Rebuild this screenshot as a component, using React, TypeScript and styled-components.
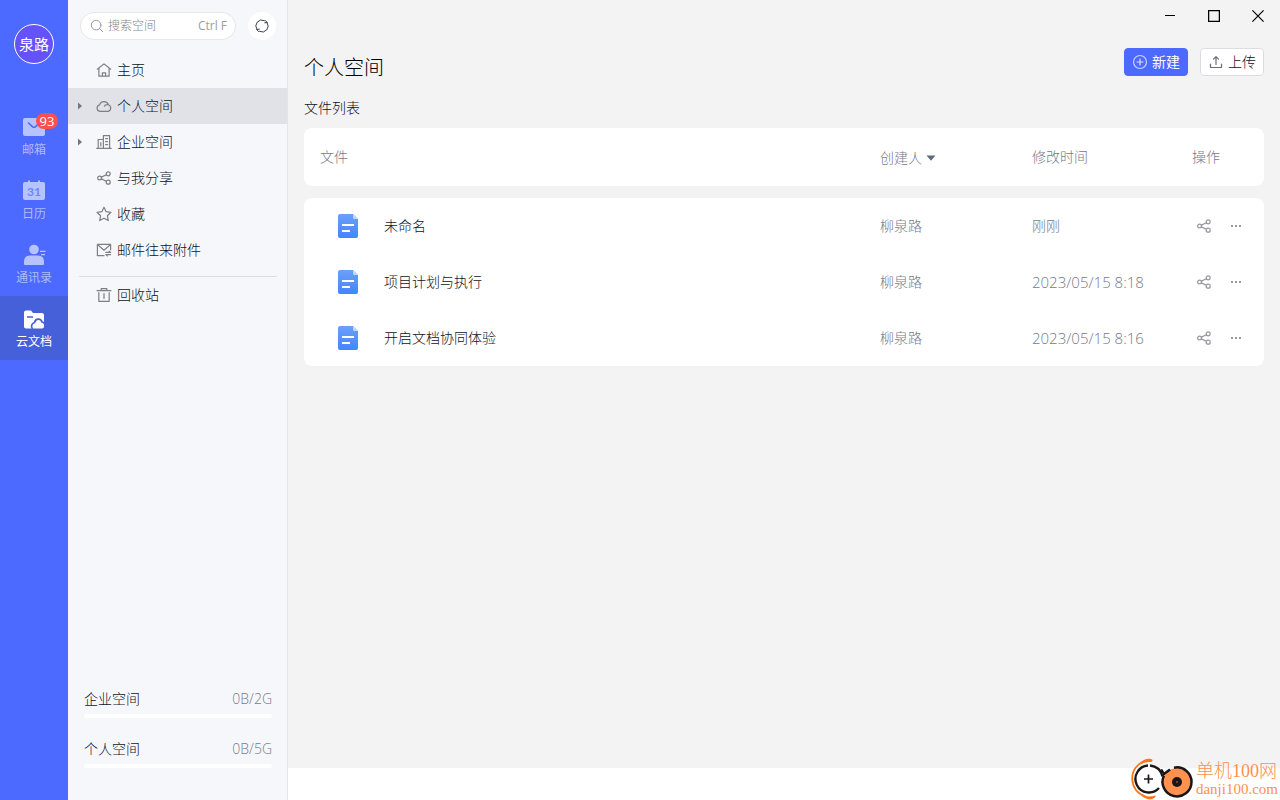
import React from 'react';
import styled, { createGlobalStyle, css } from 'styled-components';

const GlobalStyle = createGlobalStyle`
  *, *::before, *::after { box-sizing: border-box; }
  body {
    margin: 0;
    background: #ffffff;
    color: #0d1226;
    font-family: "Open Sans", "Noto Sans CJK SC", sans-serif;
    font-size: 14px;
    font-weight: 300;
    line-height: 20px;
  }
  button, input { font: inherit; color: inherit; }
  svg { display: block; flex: none; }
`;

const Shell = styled.div`
  display: grid;
  grid-template-columns: 68px 220px minmax(0, 1fr);
  min-height: 100vh;
`;

/* ---------- application rail ---------- */

const Rail = styled.nav`
  display: flex;
  flex-direction: column;
  align-items: center;
  padding-top: 24px;
  background: #4c6aff;
`;

const Avatar = styled.button`
  width: 40px;
  height: 40px;
  margin-bottom: 40px;
  padding: 0;
  border: 1px solid #ffffff;
  border-radius: 50%;
  background: #6552fb;
  color: #ffffff;
  font-size: 15px;
  font-weight: 400;
  white-space: nowrap;
`;

const RailLink = styled.a<{ $active?: boolean }>`
  display: flex;
  flex-direction: column;
  align-items: center;
  gap: 2px;
  width: 100%;
  height: 64px;
  padding-top: 11px;
  font-size: 12px;
  line-height: 18px;
  font-weight: 400;
  text-decoration: none;
  color: ${(p) => (p.$active ? '#ffffff' : '#aebbff')};
  background: ${(p) => (p.$active ? '#4560d9' : 'transparent')};
`;

const RailIcon = styled.span`
  position: relative;
  color: #b7c3ff;
  ${RailLink}[aria-current] & { color: #ffffff; }
`;

const Badge = styled.span`
  position: absolute;
  top: -2px;
  left: 14px;
  min-width: 22px;
  height: 16px;
  border-radius: 8px;
  background: #fa5050;
  color: #ffffff;
  text-align: center;
  font-size: 13px;
  line-height: 16px;
`;

/* ---------- side panel ---------- */

const Side = styled.aside`
  display: flex;
  flex-direction: column;
  border-right: 1px solid #e4e5ec;
  background: #f6f7fb;
`;

const SearchRow = styled.div`
  display: flex;
  align-items: center;
  gap: 12px;
  padding: 12px 11px 12px 12px;
`;

const SearchBox = styled.label`
  display: flex;
  flex: 1;
  align-items: center;
  min-width: 0;
  height: 28px;
  padding: 0 8px 0 9px;
  border: 1px solid #e6e7ea;
  border-radius: 14px;
  background: #ffffff;
  color: #8a8d94;
  font-size: 12px;
`;

const SearchInput = styled.input`
  flex: 1;
  min-width: 0;
  padding: 0 0 0 4px;
  border: 0;
  outline: 0;
  background: none;
  &::placeholder { color: #7f8289; opacity: 1; }
`;

const Shortcut = styled.kbd`
  font-family: inherit;
  font-size: 12px;
  font-weight: 400;
  color: #9b9da3;
`;

const RoundButton = styled.button`
  display: grid;
  place-items: center;
  width: 28px;
  height: 28px;
  padding: 0;
  border: 0;
  border-radius: 50%;
  background: #ffffff;
  color: #3b3f4c;
`;

const SpaceLink = styled.a<{ $active?: boolean }>`
  display: grid;
  grid-template-columns: 8px 16px 1fr;
  align-items: center;
  height: 36px;
  padding-left: 8px;
  column-gap: 12px;
  color: inherit;
  text-decoration: none;
  background: ${(p) => (p.$active ? '#e1e2e8' : 'transparent')};
`;

const Caret = styled.span`
  color: #75777e;
`;

const SpaceIcon = styled.span`
  color: #7d7f86;
`;

const SpaceName = styled.span`
  margin-left: -7px;
`;

const Divider = styled.hr`
  margin: 8px 10px 0 11px;
  border: 0;
  border-top: 1px solid #dcdde2;
`;

const UsageList = styled.div`
  display: flex;
  flex-direction: column;
  gap: 21px;
  margin-top: auto;
  padding: 0 15px 32px 16px;
`;

const UsageLabel = styled.div`
  display: flex;
  justify-content: space-between;
  margin-bottom: 5px;
`;

const UsageAmount = styled.span`
  color: #767a89;
`;

const UsageTrack = styled.div`
  height: 4px;
  border-radius: 2px;
  background: #ffffff;
`;

/* ---------- main area ---------- */

const Main = styled.main`
  display: flex;
  flex-direction: column;
  min-width: 0;
  background: #f3f3f3;
`;

const TitleBar = styled.div`
  display: flex;
  justify-content: flex-end;
`;

const WindowButton = styled.button`
  display: grid;
  place-items: center;
  width: 44px;
  height: 32px;
  padding: 0;
  border: 0;
  background: none;
  color: #000000;
`;

const Content = styled.section`
  flex: 1;
  padding: 16px;
`;

const Heading = styled.header`
  display: flex;
  align-items: flex-start;
  justify-content: space-between;
`;

const Title = styled.h1`
  margin: 0;
  font-size: 20px;
  line-height: 40px;
  font-weight: 300;
  color: #000000;
`;

const Actions = styled.div`
  display: flex;
  gap: 12px;
`;

const ActionButton = styled.button<{ $primary?: boolean }>`
  display: flex;
  align-items: center;
  justify-content: center;
  gap: 4px;
  width: 64px;
  height: 28px;
  padding: 0;
  border: 1px solid #dcdde2;
  border-radius: 4px;
  background: #ffffff;
  color: #0d1226;
  white-space: nowrap;
  ${(p) =>
    p.$primary &&
    css`
      border-color: #4c6aff;
      background: #4c6aff;
      color: #ffffff;
      font-weight: 400;
    `}
`;

const ListTitle = styled.h2`
  margin: 10px 0;
  font-size: 14px;
  line-height: 20px;
  font-weight: 300;
`;

const FileTable = styled.table`
  width: 100%;
  table-layout: fixed;
  border-spacing: 0;
  color: #767a89;
  text-align: left;
`;

const HeadCell = styled.th<{ $width?: number }>`
  width: ${(p) => (p.$width ? `${p.$width}px` : 'auto')};
  height: 58px;
  padding: 0 0 0 16px;
  font-weight: 300;
  background: #ffffff;
  &:first-child { border-radius: 8px 0 0 8px; }
  &:last-child { border-radius: 0 8px 8px 0; }
`;

const SortButton = styled.button`
  display: flex;
  align-items: center;
  gap: 4px;
  padding: 2px 0 0;
  border: 0;
  background: none;
`;

const FileBody = styled.tbody`
  &::before {
    content: "";
    display: block;
    height: 12px;
  }
  tr:first-child td:first-child { border-top-left-radius: 8px; }
  tr:first-child td:last-child { border-top-right-radius: 8px; }
  tr:last-child td:first-child { border-bottom-left-radius: 8px; }
  tr:last-child td:last-child { border-bottom-right-radius: 8px; }
`;

const Cell = styled.td`
  height: 56px;
  padding: 0 0 0 16px;
  background: #ffffff;
`;

const DateTime = styled.time`
  font-size: 15px;
`;

const FileLink = styled.a`
  display: flex;
  align-items: center;
  gap: 24px;
  padding-left: 16px;
  color: #0d1226;
  text-decoration: none;
`;

const RowActions = styled.div`
  display: flex;
  gap: 8px;
`;

const IconButton = styled.button`
  display: grid;
  place-items: center;
  width: 24px;
  height: 24px;
  padding: 0;
  border: 0;
  background: none;
  color: #96989e;
`;

const Footer = styled.footer`
  position: relative;
  height: 32px;
  background: #ffffff;
`;

const SiteMark = styled.a`
  position: absolute;
  right: 2px;
  bottom: 0;
  display: flex;
  align-items: center;
  gap: 2px;
  color: #ff8f4f;
  text-decoration: none;
`;

const SiteText = styled.span`
  display: flex;
  flex-direction: column;
  padding-top: 2px;
  font-family: "Liberation Serif", "Noto Sans CJK SC", serif;
  font-size: 18px;
  line-height: 18px;
  white-space: nowrap;
`;

const SiteDomain = styled.span`
  font-size: 15px;
`;

/* ---------- drawings ---------- */

const Line = ({ size = 16, children }: { size?: number; children: React.ReactNode }) => (
  <svg width={size} height={size} viewBox="0 0 16 16" fill="none" stroke="currentColor"
    strokeWidth="1.2" strokeLinejoin="round" strokeLinecap="round" aria-hidden="true">
    {children}
  </svg>
);

const HomeIcon = () => (
  <Line>
    <path d="M1.3 7.2 8 1.9l6.700 5.300M2.900 6.200v8h10.200v-8M6.400 14.100v-3.300h3.200v3.300" />
  </Line>
);
const CloudIcon = () => (
  <Line>
    <path d="M4.200 13.400a3.300 3.300 0 0 1-.6-6.500 4.600 4.600 0 0 1 8.800-.2 3.500 3.500 0 0 1-.4 6.700zM8.400 8.200c.4-1.200 1.600-1.800 4-1.500" />
  </Line>
);
const OfficeIcon = () => (
  <Line>
    <path d="M.8 14.400h14.400M7.400 14.200V1.600h6.200v12.600M7.400 5.500H2.200v8.700M9.600 4.600h2M9.600 7.600h2M9.600 10.600h2M4.800 8.500v3.500" />
  </Line>
);
const ShareIcon = () => (
  <Line>
    <circle cx="3.600" cy="8" r="1.900" />
    <circle cx="12.200" cy="3.800" r="2" />
    <circle cx="12.200" cy="12.200" r="2" />
    <path d="m5.400 7.100 4.900-2.400M5.400 8.900l4.900 2.400" />
  </Line>
);
const StarIcon = () => (
  <Line>
    <path d="m8 1.200 2.100 4.500 4.900.6-3.600 3.400.9 4.900L8 12.200l-4.300 2.400.9-4.900L1 6.300l4.900-.6z" />
  </Line>
);
const MailIcon = () => (
  <Line>
    <path d="M8 13.700H1.400V2.300h13.200v5.400M1.600 2.600 8 8.200l6.400-5.600M9.800 10.400h4.800l-1.500-1.300M14.600 12.600H9.800l1.500 1.300" />
  </Line>
);
const TrashIcon = () => (
  <Line>
    <path d="M1 3.700h14M5.200 3.500V1.600h5.600v1.900M2.800 5.500v8.800h10.400V5.500" />
    <path d="M8 7v4.200" strokeWidth="1.800" opacity=".7" />
  </Line>
);
const CaretIcon = () => (
  <svg width="8" height="8" viewBox="0 0 8 8" aria-hidden="true">
    <path d="M2 .5 6 4 2 7.500z" fill="currentColor" />
  </svg>
);

const RailMail = () => (
  <svg width="24" height="24" viewBox="0 0 24 24" aria-hidden="true">
    <rect x="1" y="3" width="22" height="18" rx="2" fill="currentColor" />
    <path d="m6 7.500 4.700 4.300q1.300 1 2.600 0L18 7.500" fill="none" stroke="#4c6aff" strokeWidth="1.600" />
  </svg>
);
const RailCalendar = () => (
  <svg width="24" height="24" viewBox="0 0 24 24" aria-hidden="true">
    <path d="M3 3h3V1.500h2V3h8V1.500h2V3h3a2 2 0 0 1 2 2v14a2 2 0 0 1-2 2H3a2 2 0 0 1-2-2V5a2 2 0 0 1 2-2z" fill="currentColor" />
    <text x="12" y="17" textAnchor="middle" fontSize="12" fontWeight="700" fill="#6a8af6" fontFamily="Lato, sans-serif">31</text>
  </svg>
);
const RailContacts = () => (
  <svg width="24" height="24" viewBox="0 0 24 24" fill="currentColor" aria-hidden="true">
    <circle cx="12" cy="6.500" r="4.800" />
    <path d="M2 21v-2.500q0-6 6-6h8q6 0 6 6V21q0 1-1 1H3q-1 0-1-1z" />
    <path d="M18 7.800h5.500v1.200H18zM19 11h4v1.200h-4z" />
  </svg>
);
const RailDocs = () => (
  <svg width="24" height="24" viewBox="0 0 24 24" aria-hidden="true">
    <path d="M2 5.500Q2 3.500 4 3.500h5l2 2.500h9q2 0 2 2v11.500q0 2-2 2H4q-2 0-2-2z" fill="currentColor" />
    <path d="M5 10h6" stroke="#4560d9" strokeWidth="1.500" />
    <path d="M10.500 22a4 4 0 0 1 2-6.500c1-4.500 6.500-4.500 7.500-.5q2 .2 2.500 2" fill="none" stroke="#4560d9" strokeWidth="1.700" />
  </svg>
);

const DocIcon = () => (
  <svg width="24" height="24" viewBox="0 0 24 24" aria-hidden="true">
    <defs>
      <linearGradient id="docFill" x1="0" y1="0" x2="0" y2="1">
        <stop offset="0" stopColor="#6d9ff8" />
        <stop offset="1" stopColor="#4285ff" />
      </linearGradient>
    </defs>
    <path d="M4 0h13l5 5v17q0 2-2 2H4q-2 0-2-2V2q0-2 2-2z" fill="url(#docFill)" />
    <path d="M17 0v3.500Q17 5 18.500 5H22z" fill="#c3d7fd" />
    <path d="M6 11h12M6 17h8" stroke="#ffffff" strokeWidth="2" />
  </svg>
);

const SiteLogo = () => (
  <svg width="64" height="42" viewBox="0 0 64 42" fill="none" aria-hidden="true">
    <path d="M17 2.500C7 5 1.500 13 2.300 22c.7 8 6 14 13.200 16.500" stroke="#ff7416" strokeWidth="1.800" />
    <path d="M8 7c4-5 9-7 13-6 2 .5 2 2.500 0 3-5 0-9 1-13 3zM11 37c5 2 10 1.500 15 .5-1 4-9 6-15-.5z" fill="#ff7416" />
    <circle cx="19" cy="21" r="14" fill="#ffffff" />
    <path d="M18 7.500a13.500 13.500 0 1 0 11 22.500M20 7.500q10 1 12.500 11" stroke="#1b1719" strokeWidth="2.300" />
    <path d="M14 21h9M18.500 16.500v9" stroke="#1b1719" strokeWidth="1.700" />
    <circle cx="47" cy="24" r="14" fill="#ff924f" />
    <path d="M44 9.700A14.500 14.500 0 1 1 34 17.500M31 11.500l3 4.500 6-4.500" stroke="#1b1719" strokeWidth="2.500" />
    <circle cx="47" cy="24" r="5" fill="#1b1719" />
    <circle cx="47" cy="24" r=".7" fill="#ff924f" />
  </svg>
);

/* ---------- data ---------- */

const apps = [
  { name: '邮箱', icon: <RailMail />, badge: 93 },
  { name: '日历', icon: <RailCalendar /> },
  { name: '通讯录', icon: <RailContacts /> },
  { name: '云文档', icon: <RailDocs />, active: true },
];

const spaces = [
  { name: '主页', icon: <HomeIcon /> },
  { name: '个人空间', icon: <CloudIcon />, nested: true, active: true },
  { name: '企业空间', icon: <OfficeIcon />, nested: true },
  { name: '与我分享', icon: <ShareIcon /> },
  { name: '收藏', icon: <StarIcon /> },
  { name: '邮件往来附件', icon: <MailIcon /> },
];

const usage = [
  { name: '企业空间', amount: '0B/2G' },
  { name: '个人空间', amount: '0B/5G' },
];

const files = [
  { name: '未命名', owner: '柳泉路', time: '刚刚' },
  { name: '项目计划与执行', owner: '柳泉路', time: '2023/05/15 8:18', dated: true },
  { name: '开启文档协同体验', owner: '柳泉路', time: '2023/05/15 8:16', dated: true },
];

type Space = { name: string; icon: React.ReactNode; nested?: boolean; active?: boolean };

const SpaceItem = ({ name, icon, nested, active }: Space) => (
  <SpaceLink href="#" $active={active} aria-current={active ? 'page' : undefined}>
    <Caret>{nested && <CaretIcon />}</Caret>
    <SpaceIcon>{icon}</SpaceIcon>
    <SpaceName>{name}</SpaceName>
  </SpaceLink>
);

export default function App() {
  return (
    <>
      <GlobalStyle />
      <Shell>
        <Rail aria-label="应用">
          <Avatar type="button">泉路</Avatar>
          {apps.map((app) => (
            <RailLink key={app.name} href="#" $active={app.active} aria-current={app.active ? 'page' : undefined}>
              <RailIcon>
                {app.icon}
                {app.badge && <Badge>{app.badge}</Badge>}
              </RailIcon>
              {app.name}
            </RailLink>
          ))}
        </Rail>

        <Side>
          <SearchRow>
            <SearchBox>
              <Line size={14}>
                <circle cx="7" cy="7" r="5.500" strokeWidth="1" />
                <path d="m11 11 3.500 3.500" strokeWidth="1" />
              </Line>
              <SearchInput type="text" placeholder="搜索空间" aria-label="搜索空间" />
              <Shortcut>Ctrl F</Shortcut>
            </SearchBox>
            <RoundButton type="button" aria-label="刷新">
              <Line>
                <path d="M3 11.500A6 6 0 0 1 10.500 2.600M13 4.500A6 6 0 0 1 5.500 13.400M11.600 2.600l1.400 1.900M13 4.500l-2.200.3M4.400 13.400 3 11.500M3 11.500l2.200-.3" strokeWidth="1" />
              </Line>
            </RoundButton>
          </SearchRow>
          <nav aria-label="空间">
            {spaces.map((space) => (
              <SpaceItem key={space.name} {...space} />
            ))}
            <Divider />
            <SpaceItem name="回收站" icon={<TrashIcon />} />
          </nav>
          <UsageList>
            {usage.map((item) => (
              <div key={item.name}>
                <UsageLabel>
                  <span>{item.name}</span>
                  <UsageAmount>{item.amount}</UsageAmount>
                </UsageLabel>
                <UsageTrack />
              </div>
            ))}
          </UsageList>
        </Side>

        <Main>
          <TitleBar>
            <WindowButton type="button" aria-label="最小化">
              <svg width="12" height="12" viewBox="0 0 12 12"><path d="M1 5.500h10" stroke="currentColor" /></svg>
            </WindowButton>
            <WindowButton type="button" aria-label="最大化">
              <svg width="12" height="12" viewBox="0 0 12 12"><path d="M.6.6h10.800v10.800H.6z" fill="none" stroke="currentColor" strokeWidth="1.300" /></svg>
            </WindowButton>
            <WindowButton type="button" aria-label="关闭">
              <svg width="12" height="12" viewBox="0 0 12 12"><path d="m.4.4 11.200 11.200M11.600.4.4 11.600" stroke="currentColor" strokeWidth="1.200" /></svg>
            </WindowButton>
          </TitleBar>

          <Content>
            <Heading>
              <Title>个人空间</Title>
              <Actions>
                <ActionButton type="button" $primary>
                  <Line>
                    <circle cx="8" cy="8" r="6.500" opacity=".7" />
                    <path d="M5 8h6M8 5v6" opacity=".8" />
                  </Line>
                  新建
                </ActionButton>
                <ActionButton type="button">
                  <Line>
                    <path d="M2.500 10v3.500h11V10M8 10.500V3M5.500 5.200 8 2.700l2.500 2.500" stroke="#6a6d77" />
                  </Line>
                  上传
                </ActionButton>
              </Actions>
            </Heading>

            <ListTitle>文件列表</ListTitle>
            <FileTable>
              <thead>
                <tr>
                  <HeadCell scope="col">文件</HeadCell>
                  <HeadCell scope="col" $width={152}>
                    <SortButton type="button">
                      创建人
                      <svg width="10" height="6" viewBox="0 0 10 6" aria-hidden="true"><path d="M.5.500h9L5 5.800z" fill="#636a7e" /></svg>
                    </SortButton>
                  </HeadCell>
                  <HeadCell scope="col" $width={160}>修改时间</HeadCell>
                  <HeadCell scope="col" $width={88}>操作</HeadCell>
                </tr>
              </thead>
              <FileBody>
                {files.map((file) => (
                  <tr key={file.name}>
                    <Cell>
                      <FileLink href="#">
                        <DocIcon />
                        {file.name}
                      </FileLink>
                    </Cell>
                    <Cell>{file.owner}</Cell>
                    <Cell>{file.dated ? <DateTime>{file.time}</DateTime> : file.time}</Cell>
                    <Cell>
                      <RowActions>
                        <IconButton type="button" aria-label="分享">
                          <ShareIcon />
                        </IconButton>
                        <IconButton type="button" aria-label="更多">
                          <svg width="12" height="2" viewBox="0 0 12 2" fill="currentColor">
                            <path d="M1 0h2v2H1zM5 0h2v2H5zM9 0h2v2H9z" />
                          </svg>
                        </IconButton>
                      </RowActions>
                    </Cell>
                  </tr>
                ))}
              </FileBody>
            </FileTable>
          </Content>

          <Footer>
            <SiteMark href="#">
              <SiteLogo />
              <SiteText>
                单机100网
                <SiteDomain>danji100.com</SiteDomain>
              </SiteText>
            </SiteMark>
          </Footer>
        </Main>
      </Shell>
    </>
  );
}
